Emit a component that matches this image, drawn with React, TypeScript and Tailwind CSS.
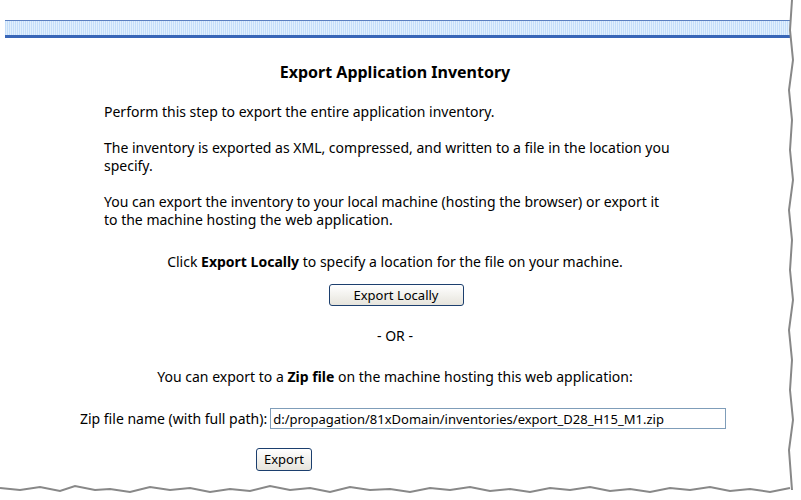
import React from 'react';

const btn =
  "border border-[#1c3f6e] rounded-[3px] bg-gradient-to-b from-white to-[#e6e4dc] text-[13px] text-black leading-none font-[family-name:'Liberation_Sans',Arial,sans-serif]";

export default function App() {
  return (
    <div className="w-[801px] h-[500px] bg-white font-[family-name:'Liberation_Serif','Times_New_Roman',serif] text-[14px] text-black relative overflow-hidden">
      <div className="pt-[20px] pl-[5px] pr-[10px]">
        <div className="h-[18px] border-t border-[#5a7fc0] border-b-[3px] border-b-[#3866b8] bg-[repeating-linear-gradient(90deg,#c4defa_0_1px,#e2f0fd_1px_2px)]" />
      </div>
      <div className="w-[790px] pr-[15px]">
        <h1 className="text-center font-bold text-[16px] mt-[22px] pl-[15px]">Export Application Inventory</h1>
        <div className="pl-[104px] pr-[100px] mt-[19px] flex flex-col gap-[18px] leading-[18px]">
          <p>Perform this step to export the entire application inventory.</p>
          <p>The inventory is exported as XML, compressed, and written to a file in the location you specify.</p>
          <p>You can export the inventory to your local machine (hosting the browser) or export it to the machine hosting the web application.</p>
        </div>
        <p className="text-center mt-[22px] pl-[15px]">Click <b>Export Locally</b> to specify a location for the file on your machine.</p>
        <div className="flex justify-center pl-[17px] mt-[12px]">
          <button className={`${btn} w-[135px] h-[22px]`}>Export Locally</button>
        </div>
        <p className="text-center mt-[19px] pl-[15px]">- OR -</p>
        <p className="text-center mt-[20px] pl-[15px]">You can export to a <b>Zip file</b> on the machine hosting this web application:</p>
        <div className="flex items-center mt-[21px] pl-[80px] gap-[3px]">
          <span>Zip file name (with full path):</span>
          <input
            readOnly
            value="d:/propagation/81xDomain/inventories/export_D28_H15_M1.zip"
            className="w-[456px] h-[21px] border border-[#7f9db9] px-[2px] text-[13px] font-[family-name:'Liberation_Sans',Arial,sans-serif] outline-none"
          />
        </div>
        <div className="pl-[256px] mt-[19px]">
          <button className={`${btn} w-[56px] h-[23px]`}>Export</button>
        </div>
      </div>
      <svg className="absolute left-0 bottom-0" width="801" height="20" viewBox="0 0 801 20">
        <path d="M0 8 L20 10 L40 7 L60 11 L75 6 L95 10 L110 9 L130 12 L150 7 L170 10 L190 8 L210 12 L230 9 L250 11 L270 6 L290 10 L310 8 L330 12 L350 7 L370 10 L390 9 L410 12 L430 8 L450 10 L470 7 L490 11 L510 9 L530 12 L550 8 L570 10 L590 7 L610 11 L630 9 L650 12 L670 8 L690 10 L710 7 L730 11 L750 9 L770 12 L790 8 L801 10 L801 20 L0 20Z" fill="#fff" />
        <path d="M0 8 L20 10 L40 7 L60 11 L75 6 L95 10 L110 9 L130 12 L150 7 L170 10 L190 8 L210 12 L230 9 L250 11 L270 6 L290 10 L310 8 L330 12 L350 7 L370 10 L390 9 L410 12 L430 8 L450 10 L470 7 L490 11 L510 9 L530 12 L550 8 L570 10 L590 7 L610 11 L630 9 L650 12 L670 8 L690 10 L710 7 L730 11 L750 9 L770 12 L790 8" fill="none" stroke="#888" strokeWidth="2" />
      </svg>
      <svg className="absolute right-0 top-0" width="14" height="500" viewBox="0 0 14 500">
        <path d="M5 0 L3 30 L6 60 L2 90 L5 120 L3 150 L6 180 L2 210 L5 240 L3 270 L6 300 L2 330 L5 360 L3 390 L6 420 L2 450 L5 490" fill="none" stroke="#888" strokeWidth="2" />
      </svg>
    </div>
  );
}
